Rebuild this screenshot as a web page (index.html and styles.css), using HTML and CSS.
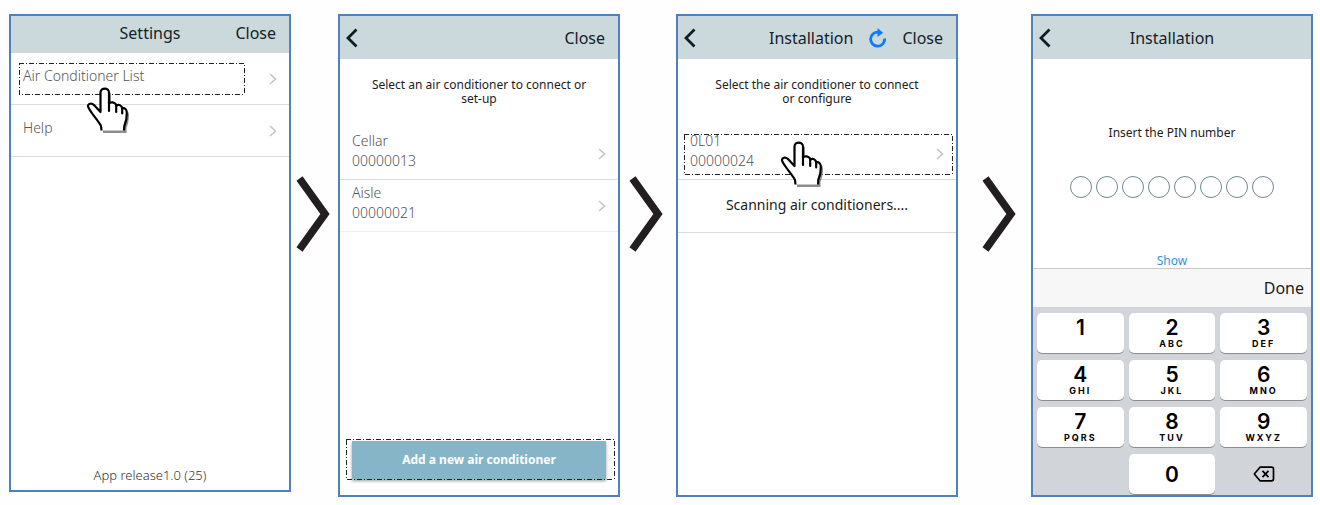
FILE: index.html
```html
<!DOCTYPE html>
<html lang="en">
<head>
    <meta charset="UTF-8">
    <meta name="viewport" content="width=device-width, initial-scale=1.0">
    <title>Air conditioner installation</title>
    <link rel="stylesheet" href="styles.css">
</head>
<body>
    <!-- shared icons -->
    <svg class="sprite" width="0" height="0" aria-hidden="true">
        <symbol id="chevron" viewBox="0 0 8 12">
            <path d="M1 1l5.5 5L1 11" fill="none" stroke="#c4c4c8" stroke-width="1.6"/>
        </symbol>
        <symbol id="back" viewBox="0 0 12 20">
            <path d="M10.5 1.5L2 10l8.500 8.500" fill="none" stroke="#111c22" stroke-width="2.8"/>
        </symbol>
        <symbol id="next" viewBox="0 0 34 76">
            <path d="M3.500 2.500L29 38 3.500 73.500" fill="none" stroke="#231f20" stroke-width="7.500"/>
        </symbol>
        <symbol id="hand" viewBox="0 0 44 48">
            <path d="M17 47L16.600 42C15 38 10 33 7 28C2 21 7 18 10 21L16.500 28V8C17 4 24 4 25 8V19C27 17 31 18 32.500 22C34 20 38 21 38 25C40 23 43 25 43 29C43 34 42 38 40.500 42V47Z" fill="#8d8d8d"/>
            <path d="M15.500 44.500L15 40C13 36 8.500 31 5.500 26.500C3.500 23.500 1.500 21 2 19.500C3 17 6 17 8 19L14.500 26V6.500C14.500 1.200 23 1.200 23 6.500V17.500C24.500 15.500 29 16 30.500 19.500C32.500 18 35.500 19 36.200 22.500C38.500 21.500 41 23.500 40.800 27C41 32 40 36 38.300 40L38 44.500" fill="#fff" stroke="#000" stroke-width="2.200" stroke-linejoin="round"/>
            <path d="M23 16V25M30.200 18.500V26M36.200 21.500V27.500" fill="none" stroke="#000" stroke-width="2.200" stroke-linecap="round"/>
        </symbol>
    </svg>

    <main class="steps">
        <section class="phone phone-short">
            <header class="phone-header header-low">
                <h2 class="title">Settings</h2>
                <button class="close">Close</button>
            </header>
            <button class="row">
                <span class="row-text">Air Conditioner List</span>
                <svg class="chevron"><use href="#chevron"/></svg>
                <svg class="outline outline-list"><rect width="100%" height="100%"/></svg>
                <svg class="hand hand-list"><use href="#hand"/></svg>
            </button>
            <button class="row">
                <span class="row-text">Help</span>
                <svg class="chevron"><use href="#chevron"/></svg>
            </button>
            <p class="release">App release1.0 (25)</p>
        </section>

        <svg class="next next-1"><use href="#next"/></svg>

        <section class="phone">
            <header class="phone-header">
                <button class="back" aria-label="Back"><svg><use href="#back"/></svg></button>
                <button class="close">Close</button>
            </header>
            <p class="hint">Select an air conditioner to connect or<br>set-up</p>
            <button class="row">
                <span class="row-text">Cellar<br>00000013</span>
                <svg class="chevron"><use href="#chevron"/></svg>
            </button>
            <button class="row row-last">
                <span class="row-text">Aisle<br>00000021</span>
                <svg class="chevron"><use href="#chevron"/></svg>
            </button>
            <div class="add">
                <button class="add-button">Add a new air conditioner</button>
                <svg class="outline outline-add"><rect width="100%" height="100%"/></svg>
            </div>
        </section>

        <svg class="next next-2"><use href="#next"/></svg>

        <section class="phone">
            <header class="phone-header header-tools">
                <button class="back" aria-label="Back"><svg><use href="#back"/></svg></button>
                <h2 class="title">Installation</h2>
                <button class="refresh" aria-label="Refresh">
                    <svg viewBox="0 0 17 20">
                        <path d="M9.500 4.200A7 7 0 1 0 15.600 10.500" fill="none" stroke="#0a7aff" stroke-width="2.800"/>
                        <path d="M8.500 0L14 4.700 8.500 9Z" fill="#0a7aff"/>
                    </svg>
                </button>
                <button class="close">Close</button>
            </header>
            <p class="hint">Select the air conditioner to connect<br>or configure</p>
            <button class="row">
                <span class="row-text">0L01<br>00000024</span>
                <svg class="chevron"><use href="#chevron"/></svg>
                <svg class="outline outline-unit"><rect width="100%" height="100%"/></svg>
                <svg class="hand hand-unit"><use href="#hand"/></svg>
            </button>
            <p class="scanning">Scanning air conditioners....</p>
        </section>

        <svg class="next next-3"><use href="#next"/></svg>

        <section class="phone">
            <header class="phone-header">
                <button class="back" aria-label="Back"><svg><use href="#back"/></svg></button>
                <h2 class="title">Installation</h2>
            </header>
            <form class="pin">
                <p class="pin-label">Insert the PIN number</p>
                <div class="pin-digits">
                    <input type="password" maxlength="1" aria-label="Digit 1">
                    <input type="password" maxlength="1" aria-label="Digit 2">
                    <input type="password" maxlength="1" aria-label="Digit 3">
                    <input type="password" maxlength="1" aria-label="Digit 4">
                    <input type="password" maxlength="1" aria-label="Digit 5">
                    <input type="password" maxlength="1" aria-label="Digit 6">
                    <input type="password" maxlength="1" aria-label="Digit 7">
                    <input type="password" maxlength="1" aria-label="Digit 8">
                </div>
                <button type="button" class="show">Show</button>
            </form>
            <div class="done-bar">
                <button class="done">Done</button>
            </div>
            <div class="keypad">
                <button class="key">1</button>
                <button class="key">2<small>ABC</small></button>
                <button class="key">3<small>DEF</small></button>
                <button class="key">4<small>GHI</small></button>
                <button class="key">5<small>JKL</small></button>
                <button class="key">6<small>MNO</small></button>
                <button class="key">7<small>PQRS</small></button>
                <button class="key">8<small>TUV</small></button>
                <button class="key">9<small>WXYZ</small></button>
                <button class="key key-zero">0</button>
                <button class="key key-delete" aria-label="Delete">
                    <svg viewBox="0 0 22 16">
                        <path d="M7 1.200H18.500Q20.500 1.200 20.500 3.200V12.800Q20.500 14.800 18.500 14.800H7L1.300 8Z" fill="none" stroke="#000" stroke-width="1.700" stroke-linejoin="round"/>
                        <path d="M9.500 4.800l6 6.400M15.500 4.800l-6 6.400" stroke="#000" stroke-width="1.700"/>
                    </svg>
                </button>
            </div>
        </section>
    </main>
</body>
</html>
```

FILE: styles.css
```css
* {
    box-sizing: border-box;
}

body {
    margin: 0;
    background-color: #fefefe;
    font-family: "Noto Sans", "Open Sans", sans-serif;
    color: #1b1b1b;
}

h2,
p {
    margin: 0;
    font-weight: 400;
}

button {
    padding: 0;
    border: none;
    background: none;
    font: inherit;
    color: inherit;
    cursor: pointer;
}

svg {
    display: block;
}

.sprite {
    position: absolute;
}

.steps {
    display: flex;
    min-height: 100vh;
    padding: 14px 7px 8px 9px;
}

.phone {
    flex: 1;
    display: flex;
    flex-direction: column;
    min-width: 0;
    border: 2px solid #4f81bd;
    background-color: #fff;
}

.phone-short {
    margin-bottom: 5px;
}

/* arrows between the steps */
.next {
    flex: none;
    width: 34px;
    height: 76px;
    margin-top: 162px;
}

.next-1 {
    margin-left: 5px;
    margin-right: 8px;
}

.next-2 {
    margin-left: 9px;
    margin-right: 13px;
}

.next-3 {
    margin-left: 24px;
    margin-right: 15px;
}

/* header */
.phone-header {
    display: grid;
    grid-template-columns: 1fr auto 1fr;
    align-items: center;
    height: 43px;
    padding: 0 6px;
    background-color: #cbd8dc;
    font-size: 16px;
    line-height: 20px;
    color: #14222a;
}

.header-low {
    height: 37px;
    padding-bottom: 4px;
}

.header-tools {
    display: flex;
    gap: 16px;
}

.title {
    grid-column: 2;
    font-size: 16px;
}

.header-tools .title {
    margin-left: auto;
}

.close {
    grid-column: 3;
    justify-self: end;
    margin-right: 7px;
}

.back {
    grid-column: 1;
    justify-self: start;
}

.back svg {
    width: 12px;
    height: 20px;
}

.refresh svg {
    width: 17px;
    height: 20px;
}

/* lists */
.row {
    position: relative;
    display: flex;
    justify-content: space-between;
    align-items: center;
    width: 100%;
    height: 52px;
    padding: 0 12px;
    border-bottom: 1px solid #dcdcde;
    font-size: 14px;
    font-weight: 300;
    line-height: 20px;
    text-align: left;
    color: #555;
}

.row-last {
    border-bottom-color: #f0f0f0;
}

.row-text {
    padding-bottom: 5px;
}

.chevron {
    width: 8px;
    height: 12px;
}

.release {
    margin-top: auto;
    padding-bottom: 5px;
    font-size: 13px;
    font-weight: 300;
    line-height: 20px;
    text-align: center;
    color: #333;
}

.hint {
    padding: 19px 12px 22px;
    font-size: 12px;
    line-height: 14px;
    text-align: center;
}

.scanning {
    padding: 15px 12px 17px;
    border-bottom: 1px solid #dcdcde;
    font-size: 14px;
    line-height: 20px;
    text-align: center;
}

.add {
    position: relative;
    margin-top: auto;
    padding: 0 12px 16px;
}

.add-button {
    width: 100%;
    height: 38px;
    padding-bottom: 2px;
    background-color: #85b5c7;
    box-shadow: 0 2px 3px rgba(0, 0, 0, 0.4);
    font-size: 12px;
    font-weight: 700;
    color: #fff;
}

/* dash-dot highlights and pointing hands */
.outline {
    position: absolute;
    overflow: visible;
    pointer-events: none;
}

.outline rect {
    fill: none;
    stroke: #222;
    stroke-width: 1;
    stroke-dasharray: 5 2 1 2;
    shape-rendering: crispEdges;
}

.outline-list {
    top: 10px;
    left: 8px;
    width: 81%;
    height: 31px;
}

.outline-unit {
    top: 6px;
    left: 6px;
    width: calc(100% - 10px);
    height: 40px;
}

.outline-add {
    top: -2px;
    left: 6px;
    width: calc(100% - 10px);
    height: 40px;
}

.hand {
    position: absolute;
    z-index: 1;
    width: 44px;
    height: 48px;
}

.hand-list {
    top: 33px;
    left: 75px;
}

.hand-unit {
    top: 12px;
    left: 102px;
}

/* PIN entry */
.pin {
    flex: 1;
    display: flex;
    flex-direction: column;
    align-items: center;
    padding-top: 64px;
}

.pin-label {
    font-size: 12px;
    line-height: 20px;
}

.pin-digits {
    display: flex;
    gap: 4px;
    margin-top: 33px;
}

.pin-digits input {
    width: 22px;
    height: 22px;
    padding: 0;
    border: 1px solid #6f8890;
    border-radius: 50%;
    background: none;
    text-align: center;
}

.show {
    margin-top: auto;
    font-size: 12px;
    line-height: 14px;
    color: #2b95e9;
}

.done-bar {
    display: flex;
    justify-content: flex-end;
    align-items: center;
    height: 39px;
    padding-right: 7px;
    border-top: 1px solid #c8c8c8;
    background-color: #f7f7f7;
    font-size: 16px;
}

.keypad {
    display: grid;
    grid-template-columns: repeat(3, 1fr);
    gap: 7px 5px;
    padding: 6px 4px 1px;
    background-color: #d1d4d9;
}

.key {
    display: flex;
    flex-direction: column;
    align-items: center;
    height: 40px;
    padding-top: 4px;
    border-radius: 5px;
    background-color: #fff;
    box-shadow: 0 1px 0 #8b8d91;
    font-family: Inter, "Liberation Sans", sans-serif;
    font-size: 21px;
    font-weight: 600;
    line-height: 21px;
    color: #000;
}

.key small {
    font-size: 9px;
    font-weight: 700;
    line-height: 11px;
    letter-spacing: 2px;
}

.key-zero {
    grid-column: 2;
    justify-content: center;
    padding-top: 0;
}

.key-delete {
    justify-content: center;
    padding-top: 0;
    background: none;
    box-shadow: none;
}

.key-delete svg {
    width: 22px;
    height: 16px;
}
```
